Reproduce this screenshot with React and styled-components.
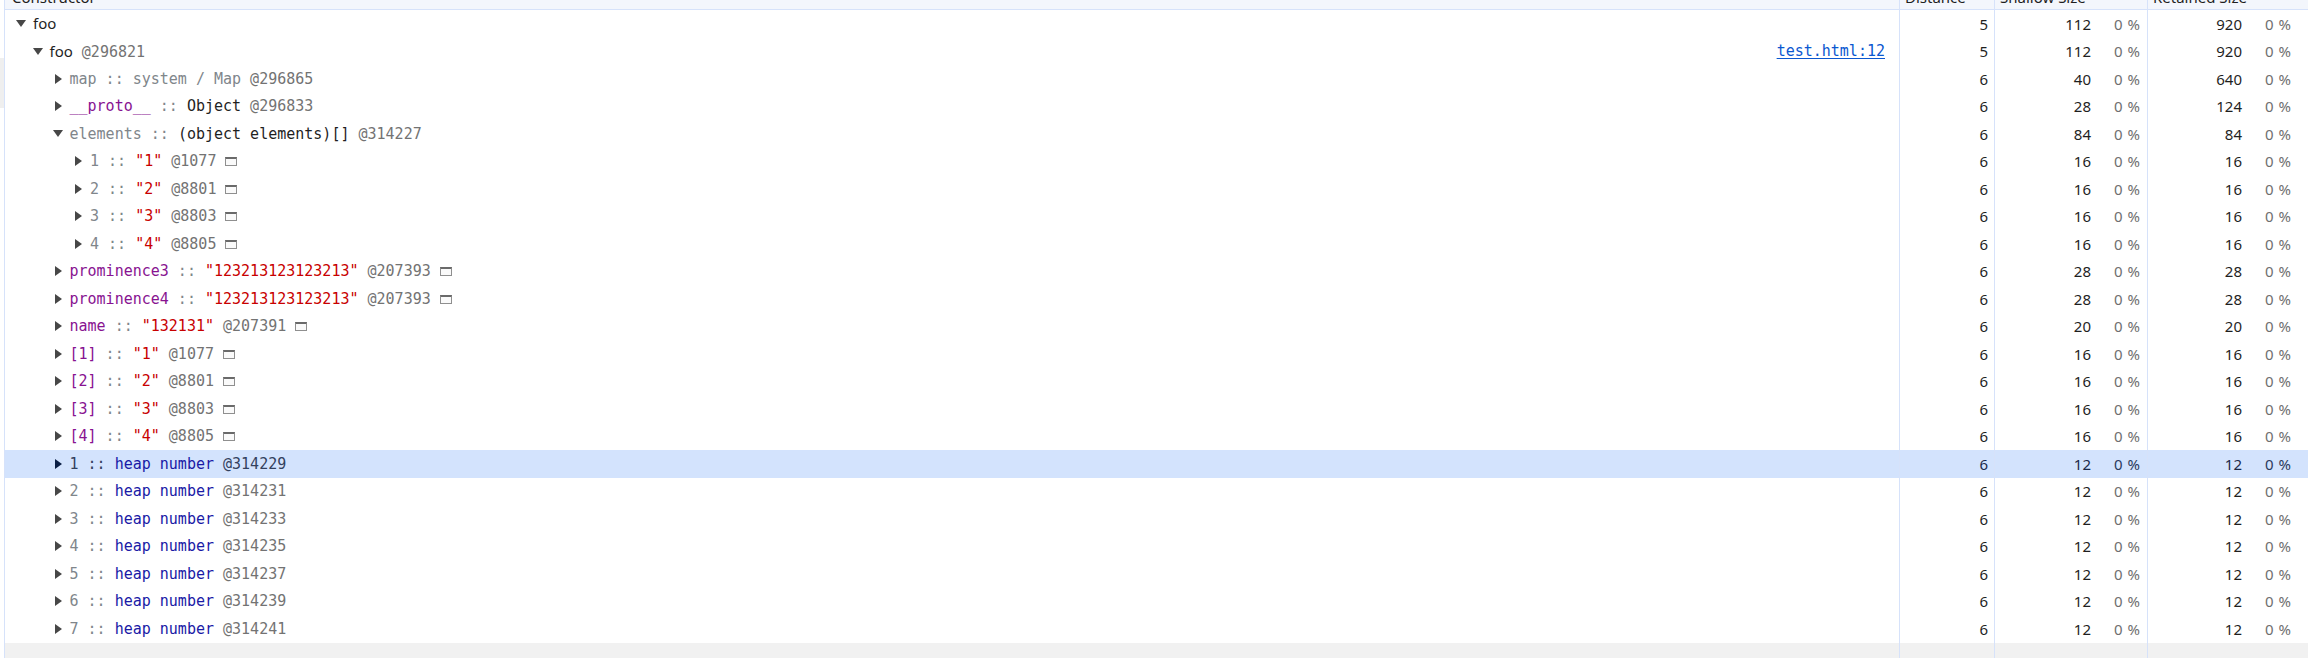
import React from 'react';
import styled, { createGlobalStyle } from 'styled-components';

const LINE = '#d6e2fa';
const COLS = '1894px 95px 153px 1fr';
const MONO = '"DejaVu Sans Mono", "Liberation Mono", monospace';
const SANS = '"Noto Sans", "Open Sans", sans-serif';

const GlobalStyle = createGlobalStyle`
  html, body { margin: 0; padding: 0; background: #fff; overflow: hidden; }
  #root { height: 658px; }
`;

const Page = styled.div`
  display: flex;
  width: 2308px;
  height: 658px;
  background: #fff;
`;

const Gutter = styled.div`
  flex: none;
  width: 4px;
  display: flex;
  flex-direction: column;
`;

const GutterMark = styled.div`
  margin-top: 58px;
  height: 50px;
  background: #efefef;
`;

const Grid = styled.div`
  flex: 1;
  min-width: 0;
  display: flex;
  flex-direction: column;
  border-left: 1px solid ${LINE};
`;

const HeaderRow = styled.div`
  flex: none;
  display: grid;
  grid-template-columns: ${COLS};
  height: 9px;
  overflow: hidden;
  background: #f3f6fc;
  border-bottom: 1px solid ${LINE};
`;

const HeaderCell = styled.div`
  padding-left: ${(p) => (p.$first ? 7 : 5)}px;
  border-left: ${(p) => (p.$first ? 'none' : `1px solid ${LINE}`)};
  font-family: ${SANS};
  font-size: 15px;
  line-height: 20px;
  color: #1f1f1f;
  white-space: nowrap;
  overflow: hidden;
`;

const HeaderText = styled.span`
  display: block;
  margin-top: -13px;
`;

const Row = styled.div`
  flex: none;
  display: grid;
  grid-template-columns: ${COLS};
  height: 27.5px;
  background: ${(p) => (p.$selected ? '#d3e3fd' : 'transparent')};
`;

const NameCell = styled.div`
  display: flex;
  align-items: center;
  min-width: 0;
  overflow: hidden;
  white-space: nowrap;
  padding-left: ${(p) => p.$indent}px;
  padding-right: 14px;
`;

const Label = styled.span`
  display: block;
  font-family: ${MONO};
  font-size: 15px;
  line-height: 20px;
  white-space: pre;
`;

const ToggleBox = styled.span`
  display: inline-flex;
  align-items: center;
  box-sizing: border-box;
  width: 17px;
  height: 12px;
  flex: none;
  padding-left: ${(p) => (p.$expanded ? 0 : 2)}px;
  color: ${(p) => (p.$selected ? '#0b1f45' : '#474747')};
  svg { fill: currentColor; display: block; }
`;

const Txt = styled.span`
  font-family: ${(p) => (p.$sans ? SANS : MONO)};
  color: ${(p) => p.$c};
`;

const Link = styled.span`
  margin-left: auto;
  font-family: ${MONO};
  font-size: 15px;
  color: #0b57d0;
  text-decoration: underline;
  text-underline-offset: 2px;
`;

const StoreBox = styled.span`
  display: inline-block;
  box-sizing: border-box;
  width: 12px;
  height: 9px;
  margin-left: 9px;
  border: 1px solid #8f8f8f;
  border-top: 2px solid #6a6a6a;
  background: #fafafa;
`;

const NumCell = styled.div`
  display: flex;
  align-items: center;
  justify-content: flex-end;
  border-left: 1px solid ${LINE};
  padding-right: ${(p) => p.$pr}px;
  font-family: ${SANS};
  font-size: 15px;
  color: ${(p) => (p.$selected ? '#1b2a4a' : '#1f1f1f')};
  white-space: nowrap;
`;

const Percent = styled.span`
  width: 49px;
  text-align: right;
  word-spacing: 1px;
  color: ${(p) => (p.$selected ? '#2a3a5c' : '#6f6f6f')};
`;

const Filler = styled.div`
  flex: 1;
  display: grid;
  grid-template-columns: ${COLS};
  background: #f1f1f1;
`;

const FillerCell = styled.div`
  border-left: ${(p) => (p.$first ? 'none' : `1px solid ${LINE}`)};
`;

const GRAY = '#80868b';
const ID = '#737373';
const DARK = '#1f1f1f';
const RED = '#c80000';
const PURPLE = '#881391';
const BLUE = '#1a1aa6';

const INDENT = [11, 27.5, 47.5, 68];

function Toggle({ expanded, selected }) {
  return (
    <ToggleBox $expanded={expanded} $selected={selected}>
      {expanded ? (
        <svg width="10" height="7" viewBox="0 0 10 7"><path d="M0 0H10L5 7Z" /></svg>
      ) : (
        <svg width="7" height="10" viewBox="0 0 7 10"><path d="M0 0L7 5L0 10Z" /></svg>
      )}
    </ToggleBox>
  );
}

const str = (s) => `"${s}"`;

const rows = [
  { level: 0, expanded: true, parts: [['foo', DARK, true]], d: 5, s: 112, r: 920 },
  { level: 1, expanded: true, parts: [['foo', DARK, true], [' @296821', ID]], link: 'test.html:12', d: 5, s: 112, r: 920 },
  { level: 2, parts: [['map :: system / Map', GRAY], [' @296865', ID]], d: 6, s: 40, r: 640 },
  { level: 2, parts: [['__proto__', PURPLE], [' :: ', GRAY], ['Object', DARK], [' @296833', ID]], d: 6, s: 28, r: 124 },
  { level: 2, expanded: true, parts: [['elements :: ', GRAY], ['(object elements)[]', DARK], [' @314227', ID]], d: 6, s: 84, r: 84 },
  ...[['1', '1077'], ['2', '8801'], ['3', '8803'], ['4', '8805']].map(([n, id]) => ({
    level: 3, parts: [[`${n} :: `, GRAY], [str(n), RED], [` @${id}`, ID]], box: true, d: 6, s: 16, r: 16,
  })),
  { level: 2, parts: [['prominence3', PURPLE], [' :: ', GRAY], [str('123213123123213'), RED], [' @207393', ID]], box: true, d: 6, s: 28, r: 28 },
  { level: 2, parts: [['prominence4', PURPLE], [' :: ', GRAY], [str('123213123123213'), RED], [' @207393', ID]], box: true, d: 6, s: 28, r: 28 },
  { level: 2, parts: [['name', PURPLE], [' :: ', GRAY], [str('132131'), RED], [' @207391', ID]], box: true, d: 6, s: 20, r: 20 },
  ...[['1', '1077'], ['2', '8801'], ['3', '8803'], ['4', '8805']].map(([n, id]) => ({
    level: 2, parts: [[`[${n}]`, PURPLE], [' :: ', GRAY], [str(n), RED], [` @${id}`, ID]], box: true, d: 6, s: 16, r: 16,
  })),
  ...['314229', '314231', '314233', '314235', '314237', '314239', '314241'].map((id, i) => ({
    level: 2, selected: i === 0, parts: [[`${i + 1} :: `, GRAY], ['heap number', BLUE], [` @${id}`, ID]], d: 6, s: 12, r: 12,
  })),
];

function NameContent({ row }) {
  const sel = row.selected;
  return (
    <Label>
      {row.parts.map(([t, c, sans], i) => {
        let color = c;
        if (sel && (c === GRAY || c === ID)) color = '#33415e';
        return (
          <Txt key={i} $c={color} $sans={sans}>
            {t}
          </Txt>
        );
      })}
      {row.box && <StoreBox />}
    </Label>
  );
}

export default function App() {
  return (
    <>
      <GlobalStyle />
      <Page>
        <Gutter>
          <GutterMark />
        </Gutter>
        <Grid>
          <HeaderRow>
            <HeaderCell $first><HeaderText>Constructor</HeaderText></HeaderCell>
            <HeaderCell><HeaderText>Distance</HeaderText></HeaderCell>
            <HeaderCell><HeaderText>Shallow Size</HeaderText></HeaderCell>
            <HeaderCell><HeaderText>Retained Size</HeaderText></HeaderCell>
          </HeaderRow>
          {rows.map((row, i) => (
            <Row key={i} $selected={row.selected}>
              <NameCell $indent={INDENT[row.level]}>
                <Toggle expanded={!!row.expanded} selected={row.selected} />
                <NameContent row={row} />
                {row.link && <Link>{row.link}</Link>}
              </NameCell>
              <NumCell $pr={6} $selected={row.selected}>{row.d}</NumCell>
              <NumCell $pr={7} $selected={row.selected}>
                <span>{row.s}</span>
                <Percent $selected={row.selected}>0 %</Percent>
              </NumCell>
              <NumCell $pr={17} $selected={row.selected}>
                <span>{row.r}</span>
                <Percent $selected={row.selected}>0 %</Percent>
              </NumCell>
            </Row>
          ))}
          <Filler>
            <FillerCell $first />
            <FillerCell />
            <FillerCell />
            <FillerCell />
          </Filler>
        </Grid>
      </Page>
    </>
  );
}
